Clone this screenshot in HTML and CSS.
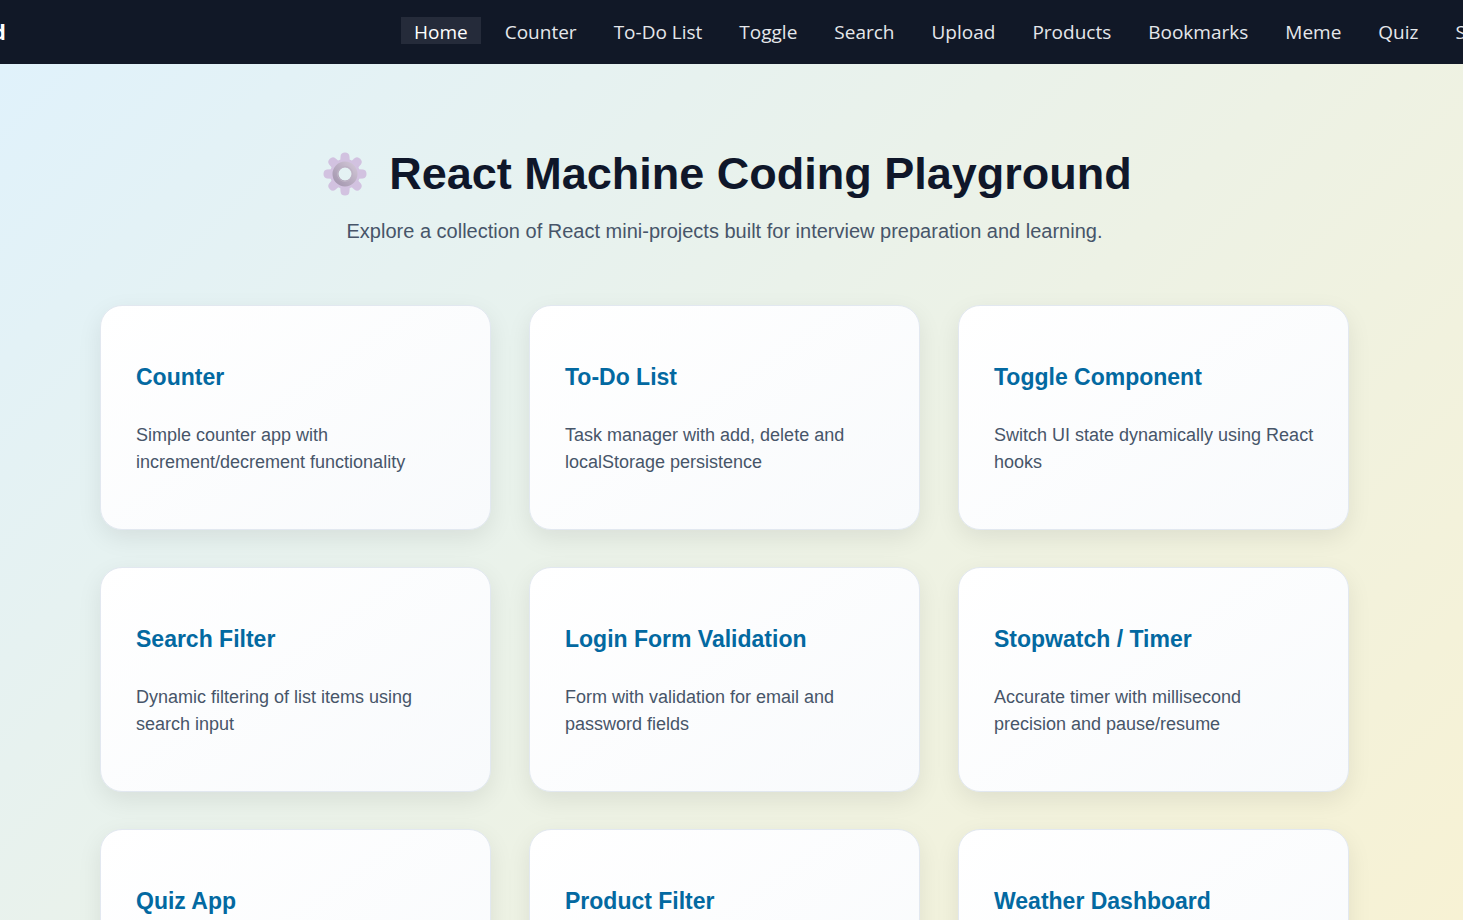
FILE: index.html
```html
<!DOCTYPE html>
<html lang="en">
<head>
<meta charset="utf-8">
<title>React Machine Coding Playground</title>
<link rel="stylesheet" href="styles.css">
</head>
<body>
<header class="navbar">
  <a class="brand" href="#">React Playground</a>
  <nav class="links">
    <a class="link active" href="#">Home</a>
    <a class="link" href="#">Counter</a>
    <a class="link" href="#">To-Do List</a>
    <a class="link" href="#">Toggle</a>
    <a class="link" href="#">Search</a>
    <a class="link" href="#">Upload</a>
    <a class="link" href="#">Products</a>
    <a class="link" href="#">Bookmarks</a>
    <a class="link" href="#">Meme</a>
    <a class="link" href="#">Quiz</a>
    <a class="link" href="#">Stopwatch</a>
  </nav>
</header>
<main class="home">
  <h1 class="title">
    <svg class="gear" viewBox="-6 0 50 44" aria-hidden="true">
      <defs>
        <linearGradient id="ring" x1="1" y1="0" x2="0" y2="1">
          <stop offset="0" stop-color="#cfc4d4"/>
          <stop offset="0.5" stop-color="#b9adc1"/>
          <stop offset="1" stop-color="#a598b0"/>
        </linearGradient>
        <path id="tooth" d="M17 12L17.600 4Q18 .5 22 .5T26.400 4L27 12Z"/>
      </defs>
      <g fill="#d2c2e0">
        <use href="#tooth"/>
        <use href="#tooth" transform="rotate(45 22 22)"/>
        <use href="#tooth" transform="rotate(90 22 22)"/>
        <use href="#tooth" transform="rotate(135 22 22)"/>
        <use href="#tooth" transform="rotate(180 22 22)"/>
        <use href="#tooth" transform="rotate(225 22 22)"/>
        <use href="#tooth" transform="rotate(270 22 22)"/>
        <use href="#tooth" transform="rotate(315 22 22)"/>
      </g>
      <g fill="none">
        <circle cx="22" cy="22" r="11" stroke="#d2c2e0" stroke-width="8"/>
        <circle cx="22" cy="22" r="9.500" stroke="url(#ring)" stroke-width="6"/>
        <circle cx="22" cy="22" r="7.500" stroke="#bdb2c4" stroke-width="1"/>
      </g>
    </svg>
    <span>React Machine Coding Playground</span>
  </h1>
  <p class="subtitle">Explore a collection of React mini-projects built for interview preparation and learning.</p>
  <section class="grid">
    <article class="card"><h2>Counter</h2><p>Simple counter app with increment/decrement functionality</p></article>
    <article class="card"><h2>To-Do List</h2><p>Task manager with add, delete and localStorage persistence</p></article>
    <article class="card"><h2>Toggle Component</h2><p>Switch UI state dynamically using React hooks</p></article>
    <article class="card"><h2>Search Filter</h2><p>Dynamic filtering of list items using search input</p></article>
    <article class="card"><h2>Login Form Validation</h2><p>Form with validation for email and password fields</p></article>
    <article class="card"><h2>Stopwatch / Timer</h2><p>Accurate timer with millisecond precision and pause/resume</p></article>
    <article class="card"><h2>Quiz App</h2></article>
    <article class="card"><h2>Product Filter</h2></article>
    <article class="card"><h2>Weather Dashboard</h2></article>
  </section>
</main>
</body>
</html>
```
FILE: styles.css
```css
* { box-sizing: border-box; }
body {
  margin: 0;
  height: 100vh;
  overflow: hidden;
  display: flex;
  flex-direction: column;
  font-family: "Liberation Sans", Arial, sans-serif;
  background: #111827;
}
.navbar {
  display: flex;
  flex: none;
  align-items: center;
  height: 64px;
  padding-bottom: 3px;
  background: #111827;
  font-family: "Open Sans", "Noto Sans", sans-serif;
  overflow: hidden;
}
.brand {
  display: flex;
  justify-content: flex-end;
  flex: 0 0 6px;
  min-width: 0;
  white-space: nowrap;
  font-size: 22px;
  font-weight: 700;
  color: #fff;
  text-decoration: none;
}
.links {
  display: flex;
  flex: none;
  gap: 11px;
  margin-left: 395px;
}
.link {
  padding: 3px 13px 0;
  font-size: 19px;
  line-height: 24px;
  color: #e5e7eb;
  text-decoration: none;
  white-space: nowrap;
}
.link.active { background: #252b3a; color: #fff; }
.home {
  flex: 1;
  min-height: 0;
  overflow: hidden;
  padding: 82px 114px 0 100px;
  background: linear-gradient(135deg, #e0f2fb, #f7f2d4);
}
.title {
  display: flex;
  justify-content: center;
  align-items: center;
  gap: 22px;
  margin: 0;
  font-size: 45px;
  line-height: 56px;
  color: #0f172a;
}
.gear { width: 50px; height: 44px; }
.subtitle {
  margin: 16px 0 61px;
  text-align: center;
  font-size: 20px;
  line-height: 26px;
  color: #475569;
}
.grid {
  display: grid;
  grid-template-columns: repeat(3, 1fr);
  grid-auto-rows: 225px;
  gap: 37px 38px;
}
.card {
  padding: 58px 34px 0 35px;
  border: 1px solid #e2e8f0;
  border-radius: 22px;
  background: linear-gradient(145deg, #ffffff, #f8fafc);
  box-shadow: 0 8px 24px rgba(0, 0, 0, 0.08);
}
.card h2 {
  margin: 0 0 31px;
  font-size: 23px;
  line-height: 27px;
  color: #0369a1;
}
.card p {
  margin: 0;
  font-size: 18px;
  line-height: 27px;
  color: #475569;
}
```
